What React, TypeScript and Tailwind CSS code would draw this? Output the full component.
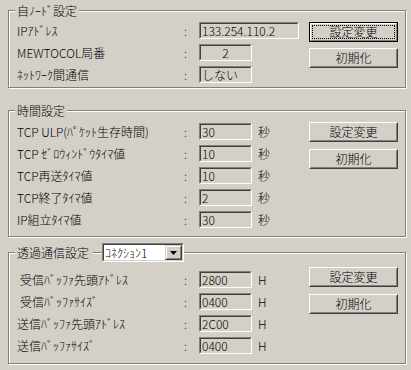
import React from 'react';

type Row = { label: string; value: string; unit?: string; wide?: boolean; center?: boolean; indent?: boolean };

const face = 'bg-[#d4d0c8]';

function Edit({ value, wide, center, white }: { value: string; wide?: boolean; center?: boolean; white?: boolean }) {
  return (
    <div
      className={`${wide ? 'w-[100px]' : 'w-[53px]'} h-[17px] shrink-0 border border-t-[#808080] border-l-[#808080] border-b-white border-r-white`}
    >
      <div
        className={`h-full border border-t-[#404040] border-l-[#404040] border-b-[#d4d0c8] border-r-[#d4d0c8] leading-[13px] whitespace-nowrap overflow-hidden ${white ? 'bg-white' : ''} ${center ? 'text-center' : 'pl-[1px]'}`}
      >
        {value}
      </div>
    </div>
  );
}

function Btn({ label, isDefault }: { label: string; isDefault?: boolean }) {
  if (isDefault) {
    return (
      <button className="w-[89px] h-[20px] border border-black bg-[#d4d0c8]">
        <div className="h-full border border-t-white border-l-white border-b-[#808080] border-r-[#808080] p-[1px]">
          <div className="h-full border border-dotted border-black flex items-center justify-center leading-none">{label}</div>
        </div>
      </button>
    );
  }
  return (
    <button className="w-[89px] h-[20px] border border-t-white border-l-white border-b-[#404040] border-r-[#404040] bg-[#d4d0c8]">
      <div className="h-full border border-t-[#d4d0c8] border-l-[#d4d0c8] border-b-[#808080] border-r-[#808080] flex items-center justify-center leading-none">
        {label}
      </div>
    </button>
  );
}

function Rows({ rows }: { rows: Row[] }) {
  return (
    <div className="flex flex-col gap-[5px]">
      {rows.map((r) => (
        <div key={r.label} className="flex items-center h-[17px]">
          <span className={`w-[167px] shrink-0 whitespace-nowrap leading-[17px] ${r.indent ? 'pl-[3px]' : ''}`}>{r.label}</span>
          <span className="w-[15px] shrink-0 leading-[17px]">:</span>
          <Edit value={r.value} wide={r.wide} center={r.center} />
          {r.unit && <span className="ml-[6px] leading-[17px]">{r.unit}</span>}
        </div>
      ))}
    </div>
  );
}

function Buttons({ focused, gap }: { focused?: boolean; gap: string }) {
  return (
    <div className={`flex flex-col ${gap}`}>
      <Btn label="設定変更" isDefault={focused} />
      <Btn label="初期化" />
    </div>
  );
}

const frame =
  'ml-[8px] w-[398px] border border-[#808080] shadow-[inset_1px_1px_0_#fff,1px_1px_0_#fff] pl-[8px] pr-[7px] min-w-0';

export default function App() {
  const node: Row[] = [
    { label: 'IPｱﾄﾞﾚｽ', value: '133.254.110.2', wide: true },
    { label: 'MEWTOCOL局番', value: '2', center: true },
    { label: 'ﾈｯﾄﾜｰｸ間通信', value: 'しない' },
  ];
  const time: Row[] = [
    { label: 'TCP ULP(ﾊﾟｹｯﾄ生存時間)', value: '30', unit: '秒' },
    { label: 'TCP ｾﾞﾛｳｨﾝﾄﾞｳﾀｲﾏ値', value: '10', unit: '秒' },
    { label: 'TCP再送ﾀｲﾏ値', value: '10', unit: '秒' },
    { label: 'TCP終了ﾀｲﾏ値', value: '2', unit: '秒' },
    { label: 'IP組立ﾀｲﾏ値', value: '30', unit: '秒' },
  ];
  const pass: Row[] = [
    { label: '受信ﾊﾞｯﾌｧ先頭ｱﾄﾞﾚｽ', value: '2800', unit: 'H', indent: true },
    { label: '受信ﾊﾞｯﾌｧｻｲｽﾞ', value: '0400', unit: 'H', indent: true },
    { label: '送信ﾊﾞｯﾌｧ先頭ｱﾄﾞﾚｽ', value: '2C00', unit: 'H' },
    { label: '送信ﾊﾞｯﾌｧｻｲｽﾞ', value: '0400', unit: 'H' },
  ];

  return (
    <div className={`w-[411px] h-[370px] overflow-hidden ${face} text-black text-[12px] font-light font-['Noto_Sans_CJK_JP',sans-serif] pt-[3px]`}>
      {/* 自ノード設定 */}
      <fieldset className={frame}>
        <legend className="ml-[-2px] px-[2px] leading-[15px] bg-[#d4d0c8]">自ﾉｰﾄﾞ設定</legend>
        <div className="flex justify-between">
          <div className="pt-[4px] pb-[4px]">
            <Rows rows={node} />
          </div>
          <div className="pt-[4px]">
            <Buttons focused gap="gap-[6px]" />
          </div>
        </div>
      </fieldset>

      {/* 時間設定 */}
      <fieldset className={`${frame} mt-[15px]`}>
        <legend className="ml-[-2px] px-[2px] leading-[15px] bg-[#d4d0c8]">時間設定</legend>
        <div className="flex justify-between">
          <div className="pt-[5px] pb-[8px]">
            <Rows rows={time} />
          </div>
          <div className="pt-[4px]">
            <Buttons gap="gap-[7px]" />
          </div>
        </div>
      </fieldset>

      {/* 透過通信設定 */}
      <fieldset className={`${frame} mt-[6px]`}>
        <legend className="ml-[-2px] h-[19px] flex bg-[#d4d0c8]">
          <span className="pl-[2px] pr-[4px] leading-[19px]">透過通信設定</span>
          <div className="w-[9px] h-[2px] mt-[9px] border-t border-[#808080] border-b border-b-white" />
          <div className="w-[82px] h-[19px] border border-t-[#808080] border-l-[#808080] border-b-white border-r-white">
            <div className="h-full flex bg-white border border-t-[#404040] border-l-[#404040] border-b-[#d4d0c8] border-r-[#d4d0c8]">
              <span className="flex-1 pl-[1px] leading-[15px] whitespace-nowrap">ｺﾈｸｼｮﾝ1</span>
              <div className="w-[17px] h-full bg-[#d4d0c8] border border-t-[#d4d0c8] border-l-[#d4d0c8] border-b-[#404040] border-r-[#404040]">
                <div className="h-full flex items-center justify-center border border-t-white border-l-white border-b-[#808080] border-r-[#808080]">
                  <svg width="7" height="4" viewBox="0 0 7 4">
                    <polygon points="0,0 7,0 3.5,4" fill="#000" />
                  </svg>
                </div>
              </div>
            </div>
          </div>
        </legend>
        <div className="flex justify-between">
          <div className="pt-[9px] pb-[9px]">
            <Rows rows={pass} />
          </div>
          <div className="pt-[5px]">
            <Buttons gap="gap-[7px]" />
          </div>
        </div>
      </fieldset>
    </div>
  );
}
